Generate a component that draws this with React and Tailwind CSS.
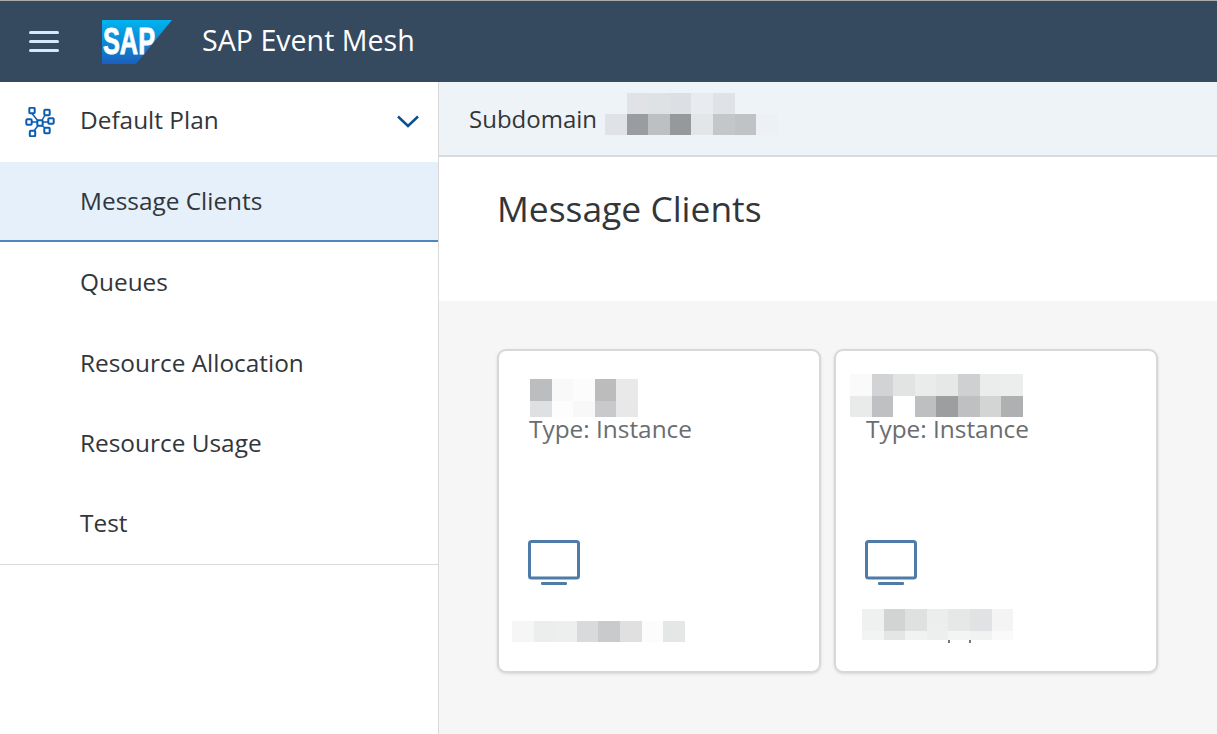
const NAV_ITEMS = ['Message Clients', 'Queues', 'Resource Allocation', 'Resource Usage', 'Test']

// blurred-out values in the screenshot, one array per row
const SUBDOMAIN_PIXELS = [
  { h: 'h-[21px]', cells: ['bg-transparent', 'bg-[#e0e2e5]', 'bg-[#dfe2e5]', 'bg-[#dcdfe3]', 'bg-[#e9ecef]', 'bg-[#dfe2e6]', 'bg-transparent', 'bg-transparent'] },
  { h: 'h-[21px]', cells: ['bg-[#dfe3e7]', 'bg-[#9a9da0]', 'bg-[#bcc0c3]', 'bg-[#95999c]', 'bg-[#e2e6e9]', 'bg-[#c4c7ca]', 'bg-[#bfc3c6]', 'bg-[#edf1f5]'] },
]

const CARDS = [
  {
    namePad: 'pt-[28px] ml-[31px]',
    name: [
      { h: 'h-[22px]', cells: ['bg-[#bcbdbe]', 'bg-[#f9f9f9]', 'bg-[#fcfcfc]', 'bg-[#bcbcbd]', 'bg-[#e9e9ea]'] },
      { h: 'h-[16px]', cells: ['bg-[#dfe0e2]', 'bg-[#fdfdfd]', 'bg-[#f8f8f8]', 'bg-[#c9c9cb]', 'bg-[#e8e8e9]'] },
    ],
    footPad: 'mt-[35px] ml-[13px]',
    foot: [
      { h: 'h-[21px]', cells: ['bg-[#f6f6f6]', 'bg-[#eceeee]', 'bg-[#edefef]', 'bg-[#d9dadc]', 'bg-[#c9cacb]', 'bg-[#e0e0e1]', 'bg-[#fcfcfc]', 'bg-[#e5e6e6]'] },
    ],
  },
  {
    namePad: 'pt-[23px] ml-[14px]',
    name: [
      { h: 'h-[22px]', cells: ['bg-[#fafafa]', 'bg-[#d2d3d5]', 'bg-[#e2e4e4]', 'bg-[#eaebeb]', 'bg-[#e6e7e7]', 'bg-[#cfd0d2]', 'bg-[#ebecec]', 'bg-[#eceeee]'] },
      { h: 'h-[21px]', cells: ['bg-[#e9ebeb]', 'bg-[#bfc0c1]', 'bg-white', 'bg-[#bebfc1]', 'bg-[#9d9e9f]', 'bg-[#bfc0c2]', 'bg-[#d3d4d4]', 'bg-[#afb0b2]'] },
    ],
    footPad: 'mt-[23px] ml-[26px]',
    foot: [
      { h: 'h-[22px]', cells: ['bg-[#eff0f0]', 'bg-[#d2d3d3]', 'bg-[#dfe0e0]', 'bg-[#eceded]', 'bg-[#e6e7e7]', 'bg-[#e1e2e3]', 'bg-[#f4f4f4]'] },
      { h: 'h-[9px]', cells: ['bg-[#f2f3f3]', 'bg-[#e4e5e5]', 'bg-[#f1f2f2]', 'bg-[#edeeee]', 'bg-[#f3f4f4]', 'bg-[#f1f2f2]', 'bg-[#fafafa]'] },
    ],
    dots: true,
  },
]

function Pixels({ rows, className = '' }) {
  return (
    <div className={`flex flex-col ${className}`}>
      {rows.map((row, i) => (
        <div key={i} className={`flex ${row.h}`}>
          {row.cells.map((c, j) => <div key={j} className={`w-[21.6px] ${c}`} />)}
        </div>
      ))}
    </div>
  )
}

function SapLogo() {
  return (
    <svg width="70" height="44" viewBox="0 0 70 44" className="overflow-visible">
      <defs>
        <linearGradient id="sapBlue" x1="0" y1="0" x2="0" y2="1">
          <stop offset="0" stopColor="#00b4f0" />
          <stop offset="1" stopColor="#1b5fbc" />
        </linearGradient>
      </defs>
      <polygon points="0,0 70,0 34,44 0,44" fill="url(#sapBlue)" />
      <text x="1" y="34" fill="#fff" stroke="#fff" strokeWidth="0.900" fontFamily="'Liberation Sans', sans-serif" fontWeight="700" fontSize="36" textLength="52" lengthAdjust="spacingAndGlyphs">SAP</text>
    </svg>
  )
}

function PlanIcon() {
  const nodes = [[7, 3.5], [22, 5.5], [4, 15], [15, 16], [26, 14], [22, 23.5], [7.5, 26.5]]
  return (
    <svg width="30" height="30" viewBox="0 0 30 30" fill="none" stroke="#0a5cb0" strokeWidth="2">
      <path d="M7 6.500 13 14M20 8 17 13.500M6.500 15H12M18 15H23.500M17 18.500 20 21M13 18.500 9 24" strokeWidth="1.500" />
      {nodes.map(([x, y]) => <rect key={`${x}-${y}`} x={x - 2.7} y={y - 2.7} width="5.400" height="5.400" rx="1" fill="#fff" />)}
    </svg>
  )
}

function MonitorIcon() {
  return (
    <svg width="52" height="46" viewBox="0 0 52 46" fill="none" className="block">
      <rect x="1.500" y="1.500" width="49" height="36.500" rx="2" stroke="#4f7ba8" strokeWidth="3" />
      <rect x="13" y="42" width="26" height="3" rx="1" fill="#4f7ba8" />
    </svg>
  )
}

function ClientCard({ card }) {
  return (
    <div className="relative w-[324px] h-[324px] bg-white rounded-[9px] border-2 border-[#d8d8d8] shadow-[0_1px_3px_rgba(0,0,0,0.12)]">
      <Pixels rows={card.name} className={card.namePad} />
      <div className="ml-[30px] text-[24.4px] leading-[24px] text-[#6a6d70]">Type: Instance</div>
      <div className="ml-[29px] mt-[99px]"><MonitorIcon /></div>
      <Pixels rows={card.foot} className={card.footPad} />
      {card.dots && (
        <div className="absolute left-[112px] top-[289px] flex gap-[19px]">
          <div className="w-[2px] h-[3px] bg-[#777]" />
          <div className="w-[2px] h-[3px] bg-[#777]" />
        </div>
      )}
    </div>
  )
}

export default function App() {
  return (
    <div className="w-[1217px] h-[734px] overflow-hidden flex flex-col bg-white text-[#32363a] font-['Open_Sans',sans-serif]">
      <header className="h-[82px] shrink-0 bg-[#354a5f] border-t border-[#aaa] flex items-center">
        <div className="ml-[29px] w-[30px] flex flex-col gap-[6px]">
          <div className="h-[3px] rounded-sm bg-[#d1e8ff]" />
          <div className="h-[3px] rounded-sm bg-[#d1e8ff]" />
          <div className="h-[3px] rounded-sm bg-[#d1e8ff]" />
        </div>
        <div className="ml-[43px]"><SapLogo /></div>
        <span className="ml-[30px] text-[28.6px] leading-[36px] mb-[4px] text-white">SAP Event Mesh</span>
      </header>

      <div className="flex flex-1 min-h-0">
        <aside className="w-[439px] shrink-0 border-r border-[#d9d9d9] bg-white">
          <div className="h-[80px] flex items-center pl-[25px] pr-[19px]">
            <PlanIcon />
            <span className="ml-[25px] mb-[4px] text-[24.4px]">Default Plan</span>
            <svg className="ml-auto mb-[2px]" width="22" height="13" viewBox="0 0 22 13" fill="none" stroke="#0a4f8f" strokeWidth="2.500"><path d="M1 1.500 11 11 21 1.500" /></svg>
          </div>
          <nav className="border-b border-[#d9d9d9]">
            {NAV_ITEMS.map((item, i) => (
              <div key={item} className={`h-[80.4px] flex items-center pl-[80px] text-[24.4px] ${i === 0 ? 'bg-[#e5f0fa] border-b-2 border-[#4f86c0]' : ''}`}>
                {item}
              </div>
            ))}
          </nav>
        </aside>

        <main className="flex-1 min-w-0 flex flex-col">
          <div className="h-[75px] shrink-0 bg-[#eef3f8] border-b-2 border-[#d9dadb] flex items-center pl-[30px]">
            <span className="text-[24px] text-[#32363a]">Subdomain</span>
            <Pixels rows={SUBDOMAIN_PIXELS} className="ml-[8px] mb-[9px]" />
          </div>
          <div className="h-[144px] shrink-0 bg-white pl-[58px] pt-[26px]">
            <h1 className="text-[35.400px] leading-[50px] font-normal">Message Clients</h1>
          </div>
          <div className="flex-1 bg-[#f6f6f6] pl-[58px] pt-[48px] flex gap-[13px] items-start">
            {CARDS.map((card, i) => <ClientCard key={i} card={card} />)}
          </div>
        </main>
      </div>
    </div>
  )
}
